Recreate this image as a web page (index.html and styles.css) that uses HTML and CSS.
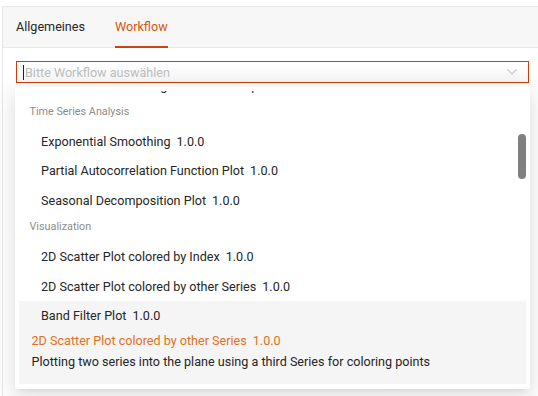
FILE: index.html
```html
<!DOCTYPE html>
<html lang="de">
<head>
    <meta charset="UTF-8">
    <meta name="viewport" content="width=device-width, initial-scale=1.0">
    <title>Workflow</title>
    <link rel="stylesheet" href="styles.css">
</head>
<body>
    <div class="panel">
        <div class="tabs">
            <div class="tab">Allgemeines</div>
            <div class="tab active">Workflow</div>
        </div>

        <div class="content">
            <div class="select">
                <div class="select-box">
                    <span class="caret"></span>
                    <span class="placeholder">Bitte Workflow auswählen</span>
                    <svg class="chevron" width="10" height="6" viewBox="0 0 10 6">
                        <path d="M0.5 0.5 L5 5 L9.5 0.5" fill="none" stroke="#c8c8c8" stroke-width="1.1"/>
                    </svg>
                </div>

                <div class="dropdown">
                    <div class="list-holder">
                        <div class="list">
                            <div class="option">Trend Detection Rising Statistics Sample<span class="ver">1.0.0</span></div>
                            <div class="group">Time Series Analysis</div>
                            <div class="option">Exponential Smoothing<span class="ver">1.0.0</span></div>
                            <div class="option">Partial Autocorrelation Function Plot<span class="ver">1.0.0</span></div>
                            <div class="option">Seasonal Decomposition Plot<span class="ver">1.0.0</span></div>
                            <div class="group">Visualization</div>
                            <div class="option">2D Scatter Plot colored by Index<span class="ver">1.0.0</span></div>
                            <div class="option">2D Scatter Plot colored by other Series<span class="ver">1.0.0</span></div>
                            <div class="option active">Band Filter Plot<span class="ver">1.0.0</span></div>
                        </div>
                        <div class="scroll-thumb"></div>
                    </div>
                    <div class="footer">
                        <div class="footer-title">2D Scatter Plot colored by other Series<span class="ver">1.0.0</span></div>
                        <div class="footer-desc">Plotting two series into the plane using a third Series for coloring points</div>
                    </div>
                </div>
            </div>
        </div>
    </div>
</body>
</html>
```

FILE: styles.css
```css
* {
    margin: 0;
    padding: 0;
    box-sizing: border-box;
}

body {
    background: white;
    font-family: Roboto, "Liberation Sans", Arial, sans-serif;
    font-size: 12.6px;
    color: #262626;
    overflow: hidden;
    height: 396px;
}

.panel {
    margin: 6px 0 0 2px;
    border-left: 1px solid #e8e8e8;
    height: 400px;
}

.tabs {
    display: flex;
    gap: 30px;
    padding-left: 13px;
    background: #f7f7f7;
    border-top: 1px solid #e8e8e8;
    border-bottom: 1px solid #e8e8e8;
    height: 42px;
}

.tab {
    height: 40px;
    line-height: 40px;
    color: #262626;
}

.tab.active {
    color: #d4550f;
    border-bottom: 2px solid #cc4410;
    height: 41px;
    line-height: 39px;
}

.content {
    padding: 13px 9px 0 13px;
}

.select {
    position: relative;
}

.select-box {
    height: 22px;
    border: 1px solid #cc3d0a;
    background: linear-gradient(#ffffff, #f6f6f6);
    display: flex;
    align-items: center;
    padding-left: 6px;
    padding-right: 11px;
}

.caret {
    width: 1px;
    height: 15px;
    background: #222;
    margin-right: 1px;
}

.placeholder {
    color: #bdbdbd;
    flex: 1;
}

.chevron {
    display: block;
}

.dropdown {
    position: absolute;
    top: 26px;
    left: -1px;
    width: 515px;
    height: 302px;
    padding: 4px;
    background: white;
    border-radius: 2px;
    box-shadow: 0 3px 6px -4px rgba(0,0,0,0.12), 0 6px 16px 0 rgba(0,0,0,0.08), 0 9px 28px 8px rgba(0,0,0,0.05);
}

.list-holder {
    position: relative;
    height: 240px;
    overflow: hidden;
}

.list {
    margin-top: -19.8px;
}

.option {
    padding: 4.5px 12px 4.5px 22px;
    line-height: 20.3px;
    white-space: nowrap;
}

.option.active {
    background: #f5f5f5;
}

.group {
    font-size: 10.8px;
    color: #8c8c8c;
    line-height: 17px;
    padding: 2.3px 10px 7.9px 10.5px;
}

.ver {
    margin-left: 6px;
}

.scroll-thumb {
    position: absolute;
    top: 43px;
    right: 0;
    width: 8px;
    height: 45px;
    border-radius: 4px;
    background: #808080;
}

.footer {
    background: #f5f5f5;
    padding: 0 12px 12px 12.5px;
    line-height: 20.5px;
}

.footer-title {
    color: #e2701c;
}

.footer-desc {
    color: #262626;
}
```
